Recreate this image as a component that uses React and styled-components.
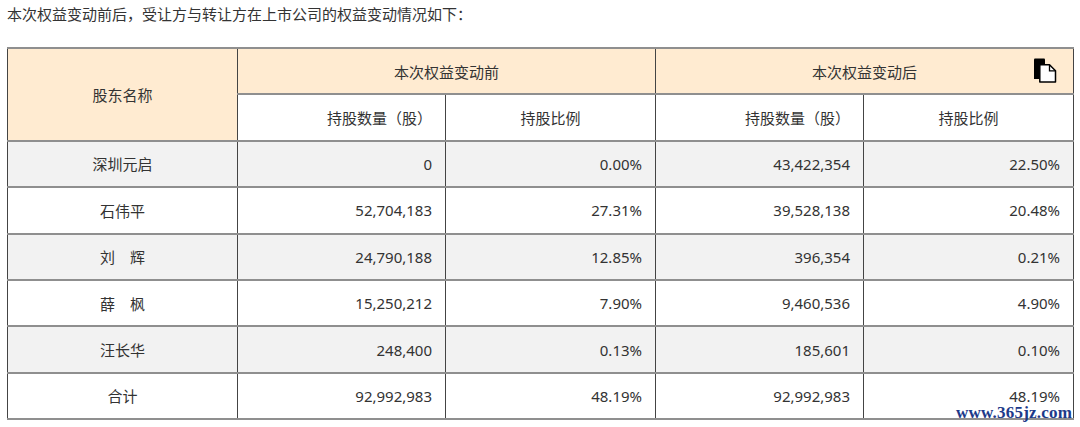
import React from "react";
import styled, { createGlobalStyle } from "styled-components";

const Global = createGlobalStyle`
  html, body { margin: 0; padding: 0; background: #fff; }
  body { font-family: "Noto Sans", "Noto Sans CJK SC", sans-serif; color: #333; }
`;

const Page = styled.div`
  position: relative;
  width: 1080px;
  height: 427px;
  padding: 0 7px;
  box-sizing: border-box;
  overflow: hidden;
`;

const Intro = styled.p`
  margin: 0;
  font-size: 15px;
  line-height: 28px;
  color: #333;
`;

const Table = styled.table`
  margin-top: 19px;
  width: 1066px;
  table-layout: fixed;
  border-collapse: collapse;
  font-size: 15px;
  color: #333;
`;

const Row = styled.tr`
  height: 46.4px;
  background: ${(p) => (p.$shade ? "#f2f2f2" : "#fff")};
`;

const Cell = styled.td`
  border-left: 1px solid #444;
  border-right: 1px solid #444;
  border-top: 2px solid #8f8f8f;
  border-bottom: 2px solid #8f8f8f;
  padding: 0 13px;
  text-align: ${(p) => p.$align || "center"};
  vertical-align: middle;
  white-space: nowrap;
  position: relative;
  background: ${(p) => (p.$head ? "#ffebd1" : "transparent")};
`;

const CopyIcon = styled.svg`
  position: absolute;
  right: 16px;
  top: 9px;
  width: 24px;
  height: 25px;
`;

const Watermark = styled.div`
  position: absolute;
  right: 8px;
  bottom: 6px;
  font-family: "Liberation Serif", serif;
  font-weight: bold;
  font-size: 17px;
  letter-spacing: 0.2px;
  color: #1d3a8a;
  line-height: 1;
`;

const rows = [
  ["深圳元启", "0", "0.00%", "43,422,354", "22.50%"],
  ["石伟平", "52,704,183", "27.31%", "39,528,138", "20.48%"],
  ["刘　辉", "24,790,188", "12.85%", "396,354", "0.21%"],
  ["薛　枫", "15,250,212", "7.90%", "9,460,536", "4.90%"],
  ["汪长华", "248,400", "0.13%", "185,601", "0.10%"],
  ["合计", "92,992,983", "48.19%", "92,992,983", "48.19%"],
];

export default function App() {
  return (
    <>
      <Global />
      <Page>
        <Intro>本次权益变动前后，受让方与转让方在上市公司的权益变动情况如下：</Intro>
        <Table>
          <colgroup>
            <col style={{ width: 230 }} />
            <col style={{ width: 208 }} />
            <col style={{ width: 210 }} />
            <col style={{ width: 208 }} />
            <col style={{ width: 210 }} />
          </colgroup>
          <tbody>
            <Row>
              <Cell $head rowSpan={2}>股东名称</Cell>
              <Cell $head colSpan={2}>本次权益变动前</Cell>
              <Cell $head colSpan={2}>
                本次权益变动后
                <CopyIcon viewBox="0 0 24 25">
                  <path d="M1 1.5 Q1 0.5 2 0.5 H11 Q12 0.5 12 1.5 V21 H1 Z" fill="#000" />
                  <path d="M6.8 6.8 H16.5 L22.5 12.8 V24 H6.8 Z" fill="#fff" stroke="#000" strokeWidth="1.5" strokeLinejoin="round" />
                  <path d="M16.5 6.8 V12.8 H22.5" fill="none" stroke="#000" strokeWidth="1.3" />
                </CopyIcon>
              </Cell>
            </Row>
            <Row>
              <Cell $align="right">持股数量（股）</Cell>
              <Cell>持股比例</Cell>
              <Cell $align="right">持股数量（股）</Cell>
              <Cell>持股比例</Cell>
            </Row>
            {rows.map((r, i) => (
              <Row key={i} $shade={i % 2 === 0 && i < 5}>
                <Cell>{r[0]}</Cell>
                <Cell $align="right">{r[1]}</Cell>
                <Cell $align="right">{r[2]}</Cell>
                <Cell $align="right">{r[3]}</Cell>
                <Cell $align="right">{r[4]}</Cell>
              </Row>
            ))}
          </tbody>
        </Table>
        <Watermark>www.365jz.com</Watermark>
      </Page>
    </>
  );
}
